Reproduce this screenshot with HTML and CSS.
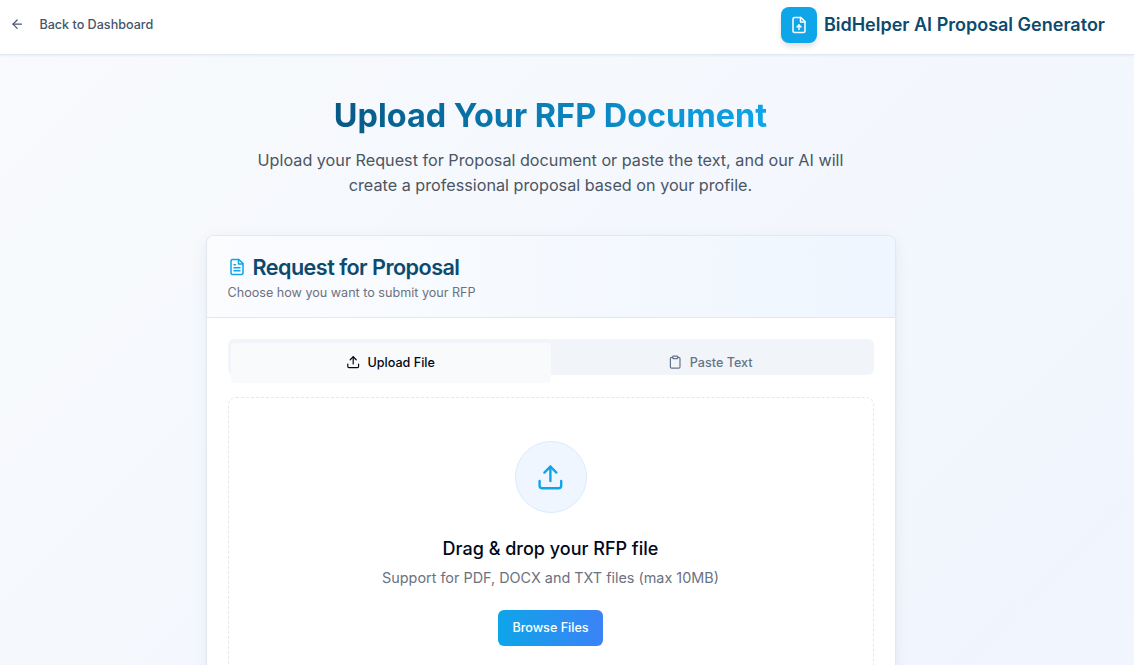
FILE: index.html
```html
<!DOCTYPE html>
<html lang="en">
<head>
  <meta charset="UTF-8">
  <title>BidHelper AI Proposal Generator</title>
  <link rel="stylesheet" href="styles.css">
</head>
<body>

  <header class="topbar">
    <a class="back-link" href="#">
      <svg class="back-icon" viewBox="0 0 24 24"><path d="M19 12H5"/><path d="M12 19l-7-7 7-7"/></svg>
      <span>Back to Dashboard</span>
    </a>
    <div class="brand">
      <div class="brand-logo">
        <svg viewBox="0 0 24 24"><path d="M14.5 2H6a2 2 0 0 0-2 2v16a2 2 0 0 0 2 2h12a2 2 0 0 0 2-2V7.5L14.5 2z"/><path d="M14 2v6h6"/><path d="M12 18v-6"/><path d="M9.5 14.5L12 12l2.5 2.5"/></svg>
      </div>
      <div class="brand-name">BidHelper AI Proposal Generator</div>
    </div>
  </header>

  <main class="page">
    <h1 class="page-title"><span>Upload Your RFP Document</span></h1>
    <p class="page-intro">Upload your Request for Proposal document or paste the text, and our AI will create a professional proposal based on your profile.</p>

    <section class="card">
      <div class="card-header">
        <h2 class="card-title">
          <svg viewBox="0 0 24 24"><path d="M14.5 2H6a2 2 0 0 0-2 2v16a2 2 0 0 0 2 2h12a2 2 0 0 0 2-2V7.5L14.5 2z"/><path d="M14 2v6h6"/><path d="M16 13H8"/><path d="M16 17H8"/><path d="M10 9H8"/></svg>
          Request for Proposal
        </h2>
        <p class="card-sub">Choose how you want to submit your RFP</p>
      </div>

      <div class="card-body">
        <div class="tabs">
          <div class="tab active">
            <svg viewBox="0 0 24 24"><path d="M21 15v4a2 2 0 0 1-2 2H5a2 2 0 0 1-2-2v-4"/><path d="M17 8l-5-5-5 5"/><path d="M12 3v12"/></svg>
            Upload File
          </div>
          <div class="tab">
            <svg viewBox="0 0 24 24"><rect x="8" y="2" width="8" height="4" rx="1"/><path d="M16 4h2a2 2 0 0 1 2 2v14a2 2 0 0 1-2 2H6a2 2 0 0 1-2-2V6a2 2 0 0 1 2-2h2"/></svg>
            Paste Text
          </div>
        </div>

        <div class="dropzone">
          <div class="drop-circle">
            <svg viewBox="0 0 24 24"><path d="M21 15v4a2 2 0 0 1-2 2H5a2 2 0 0 1-2-2v-4"/><path d="M17 8l-5-5-5 5"/><path d="M12 3v12"/></svg>
          </div>
          <h3 class="drop-title">Drag &amp; drop your RFP file</h3>
          <p class="drop-sub">Support for PDF, DOCX and TXT files (max 10MB)</p>
          <button class="browse-btn">Browse Files</button>
        </div>
      </div>
    </section>
  </main>

</body>
</html>
```

FILE: styles.css
```css
html, body {
  height: 665px;
  overflow: hidden;
}
body {
  margin: 0;
  font-family: 'Inter', sans-serif;
  background: linear-gradient(135deg, #f8fafc 0%, #f0f5fe 100%);
  color: #020817;
}
svg {
  fill: none;
  stroke: currentColor;
  stroke-width: 2;
  stroke-linecap: round;
  stroke-linejoin: round;
}
.topbar {
  display: flex;
  align-items: center;
  justify-content: space-between;
  box-sizing: border-box;
  height: 55px;
  padding: 0 29px 5px 10px;
  background: #fff;
  border-bottom: 1px solid #e2e8f0;
  box-shadow: 0 1px 2px rgba(0,0,0,0.05);
}
.back-link {
  display: flex;
  align-items: center;
  gap: 15px;
  color: #475569;
  font-size: 12.6px;
  font-weight: 500;
  text-decoration: none;
}
.back-icon {
  width: 14.4px;
  height: 14.4px;
}
.brand {
  display: flex;
  align-items: center;
  gap: 7px;
}
.brand-logo {
  display: flex;
  align-items: center;
  justify-content: center;
  width: 36px;
  height: 36px;
  border-radius: 8px;
  background: #0ea5e9;
  color: #fff;
  box-shadow: 0 4px 6px -1px rgba(0,0,0,0.15);
}
.brand-logo svg {
  width: 18px;
  height: 18px;
}
.brand-name {
  color: #0c4a6e;
  font-size: 18px;
  font-weight: 600;
}
.page {
  display: flex;
  flex-direction: column;
  align-items: center;
  width: 1101px;
  padding-top: 40px;
}
.page-title {
  margin: 0 0 11px;
  font-size: 32.4px;
  line-height: 42px;
  font-weight: 700;
}
.page-title span {
  background: linear-gradient(90deg, #075985, #0ea5e9);
  -webkit-background-clip: text;
  background-clip: text;
  color: transparent;
}
.page-intro {
  width: 630px;
  margin: 0 0 37px;
  color: #4b5563;
  font-size: 16.2px;
  line-height: 25px;
  text-align: center;
}
.card {
  width: 690px;
  box-sizing: border-box;
  background: #fff;
  border: 1px solid #e2e8f0;
  border-radius: 8px;
  box-shadow: 0 4px 16px rgba(15,23,42,0.06), 0 2px 4px -2px rgba(0,0,0,0.06);
}
.card-header {
  padding: 17px 21px 16px;
  border-bottom: 1px solid #e2e8f0;
  border-radius: 8px 8px 0 0;
  background: linear-gradient(90deg, #fbfcfe, #eff6ff);
}
.card-title {
  display: flex;
  align-items: center;
  gap: 7px;
  margin: 0;
  color: #0c4a6e;
  font-size: 21.6px;
  line-height: 28px;
  font-weight: 600;
  letter-spacing: -0.54px;
}
.card-title svg {
  width: 18px;
  height: 18px;
  color: #0ea5e9;
}
.card-sub {
  margin: 4px 0 0;
  color: #6b7280;
  font-size: 12.6px;
  line-height: 16px;
}
.card-body {
  padding: 21px 21px 24px;
}
.tabs {
  display: flex;
  height: 36px;
  padding: 4px 3px 0;
  box-sizing: border-box;
  border-radius: 6px;
  background: #f1f5f9;
  margin-bottom: 22px;
}
.tab {
  flex: 1;
  display: flex;
  align-items: center;
  justify-content: center;
  gap: 7px;
  box-sizing: border-box;
  height: 40px;
  padding-bottom: 2px;
  color: #64748b;
  font-size: 12.6px;
  font-weight: 500;
}
.tab svg {
  width: 14.4px;
  height: 14.4px;
}
.tab.active {
  background: #f8fafc;
  color: #020817;
  border-radius: 4px;
}
.dropzone {
  display: flex;
  flex-direction: column;
  align-items: center;
  padding: 43px 0 40px;
  border: 1px dashed #e2e8f0;
  border-radius: 8px;
}
.drop-circle {
  display: flex;
  align-items: center;
  justify-content: center;
  width: 72px;
  height: 72px;
  box-sizing: border-box;
  border: 1px solid #dbeafe;
  border-radius: 50%;
  background: #eff6ff;
  color: #0ea5e9;
}
.drop-circle svg {
  width: 28.8px;
  height: 28.8px;
}
.drop-title {
  margin: 25px 0 0;
  color: #020817;
  font-size: 18px;
  line-height: 22px;
  font-weight: 500;
}
.drop-sub {
  margin: 8px 0 0;
  color: #6b7280;
  font-size: 14.4px;
  line-height: 20px;
}
.browse-btn {
  margin-top: 22px;
  width: 105px;
  height: 36px;
  padding: 0 0 2px;
  border: none;
  border-radius: 6px;
  background: linear-gradient(90deg, #0ea5e9, #3b82f6);
  color: #fff;
  font-family: 'Inter', sans-serif;
  font-size: 12.6px;
  font-weight: 500;
}
```
